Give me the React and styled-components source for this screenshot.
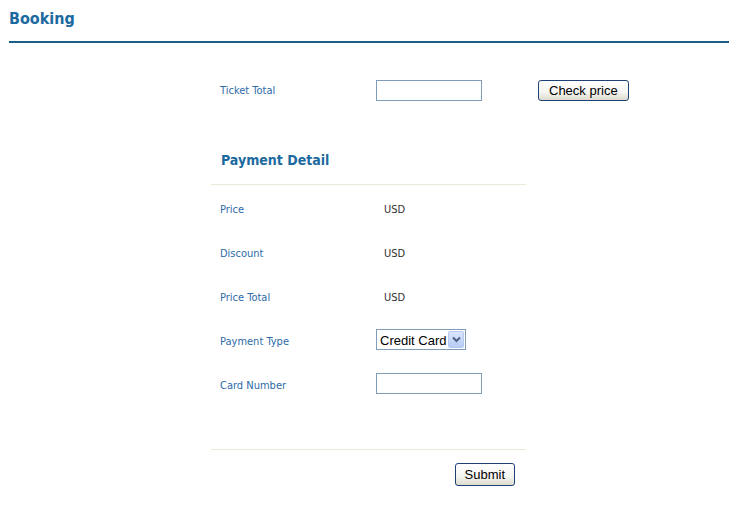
import React from 'react'
import styled, { createGlobalStyle } from 'styled-components'

const Global = createGlobalStyle`
  body {
    margin: 0;
    background: #fff;
    font-family: "DejaVu Sans Condensed", "DejaVu Sans", sans-serif;
  }
`

const Page = styled.div`
  padding: 0 14px 0 9px;
  width: 720px;
`

const Header = styled.h1`
  margin: 0;
  padding: 9px 0 0;
  height: 32px;
  font-size: 16px;
  font-weight: bold;
  color: #1c6aa0;
  border-bottom: 2px solid #1a5f87;
`

const Form = styled.div`
  margin: 36px 0 0 202px;
  width: 315px;
`

const TopRow = styled.div`
  display: grid;
  grid-template-columns: 165px 162px max-content;
  align-items: center;
  height: 22px;
`

const Label = styled.div`
  padding-left: 9px;
  font-size: 11px;
  color: #2d6aa9;
`

const Value = styled.div`
  padding-left: 8px;
  font-size: 11px;
  color: #333;
`

const Field = styled.div`
  margin-top: ${p => -(p.$lift || 0)}px;
  margin-bottom: ${p => p.$lift || 0}px;
`

const TextBox = styled.input`
  display: block;
  box-sizing: border-box;
  width: 106px;
  height: 21px;
  margin: 0;
  border: 1px solid #7f9db9;
  padding: 2px;
  font-size: 13px;
`

const XpButton = styled.button`
  box-sizing: border-box;
  height: ${p => p.$h || 21}px;
  padding: 0 ${p => p.$px || 10}px;
  border: 1px solid #1c4375;
  border-radius: 3px;
  background: linear-gradient(#ffffff, #f4f4f0 60%, #dedbce);
  font-family: "Liberation Sans", Arial, sans-serif;
  font-size: 13px;
  color: #000;
  white-space: nowrap;
  cursor: pointer;
`

const Section = styled.div`
  margin-top: 51px;
`

const SectionTitle = styled.h2`
  margin: 0;
  padding: 0 0 16px 10px;
  font-size: 14px;
  font-weight: bold;
  color: #1c6aa0;
  border-bottom: 1px solid #ece9d8;
`

const Rows = styled.div`
  display: flex;
  flex-direction: column;
  gap: 22px;
  padding: 13px 0 53px;
  border-bottom: 1px solid #ece9d8;
`

const Row = styled.div`
  display: grid;
  grid-template-columns: 165px auto;
  align-items: center;
  height: 22px;
`

const SelectWrap = styled.div`
  position: relative;
  box-sizing: border-box;
  width: 90px;
  height: 21px;
  border: 1px solid #7f9db9;
  background: #fff;
`

const Select = styled.select`
  appearance: none;
  width: 100%;
  height: 100%;
  border: 0;
  margin: 0;
  padding: 0 0 0 3px;
  background: transparent;
  font-family: "Liberation Sans", Arial, sans-serif;
  font-size: 13px;
  color: #000;
  outline: none;
`

const Arrow = styled.span`
  position: absolute;
  top: 1px;
  right: 1px;
  width: 16px;
  height: 17px;
  border: 1px solid #b5c8f2;
  box-sizing: border-box;
  border-radius: 2px;
  background: linear-gradient(#dce6fb, #b7cbf5);
  display: flex;
  align-items: center;
  justify-content: center;
  pointer-events: none;
`

const Footer = styled.div`
  display: flex;
  justify-content: flex-end;
  padding: 13px 11px 0 0;
`

const rows = [
  ['Price', 'USD'],
  ['Discount', 'USD'],
  ['Price Total', 'USD'],
]

export default function App() {
  return (
    <Page>
      <Global />
      <Header>Booking</Header>
      <Form>
        <TopRow>
          <Label>Ticket Total</Label>
          <Field><TextBox /></Field>
          <Field><XpButton $h={21} $px={10}>Check price</XpButton></Field>
        </TopRow>
        <Section>
          <SectionTitle>Payment Detail</SectionTitle>
          <Rows>
            {rows.map(([l, v]) => (
              <Row key={l}>
                <Label>{l}</Label>
                <Value>{v}</Value>
              </Row>
            ))}
            <Row>
              <Label>Payment Type</Label>
              <Field $lift={2}>
                <SelectWrap>
                  <Select defaultValue="cc">
                    <option value="cc">Credit Card</option>
                  </Select>
                  <Arrow>
                    <svg width="9" height="7" viewBox="0 0 9 7">
                      <path d="M1 1.5 L4.5 5 L8 1.5" fill="none" stroke="#4d6185" strokeWidth="2" />
                    </svg>
                  </Arrow>
                </SelectWrap>
              </Field>
            </Row>
            <Row>
              <Label>Card Number</Label>
              <Field $lift={2}><TextBox /></Field>
            </Row>
          </Rows>
          <Footer>
            <XpButton $h={23} $px={9}>Submit</XpButton>
          </Footer>
        </Section>
      </Form>
    </Page>
  )
}
